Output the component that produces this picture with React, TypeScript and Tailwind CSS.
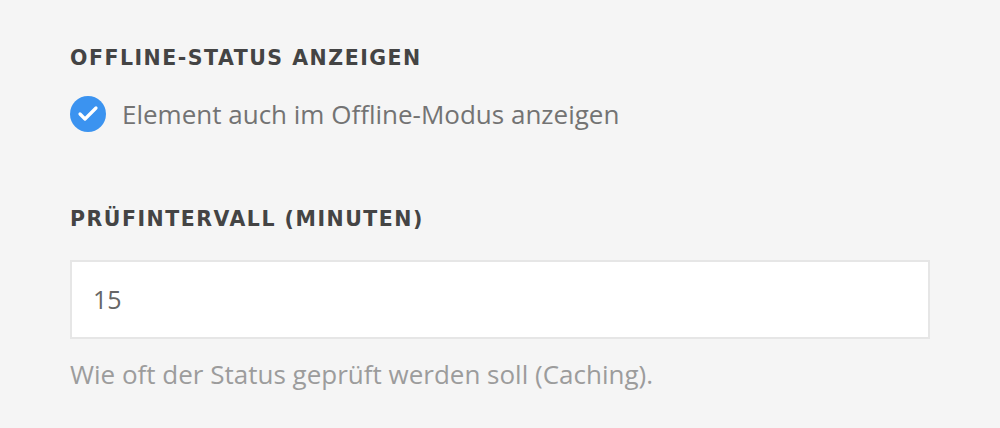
import { Check } from 'lucide-react'

export default function App() {
  return (
    <div className="min-h-screen w-full bg-[#f5f5f5] px-[70px] pt-[42px]">
      <div className="w-[860px] font-['Open_Sans',sans-serif]">
        {/* Offline status */}
        <h3 className="font-['DejaVu_Sans',sans-serif] text-[20.5px] font-bold uppercase leading-[32px] tracking-[1.5px] text-[#444444]">
          Offline-Status anzeigen
        </h3>
        <label className="mt-[22px] flex items-center gap-[16px]">
          <span className="flex h-[36px] w-[36px] items-center justify-center rounded-full bg-[#3b93f0]">
            <Check className="h-[24px] w-[24px] text-white" strokeWidth={3.2} />
          </span>
          <span className="text-[26px] leading-[36px] text-[#737373]">
            Element auch im Offline-Modus anzeigen
          </span>
        </label>

        {/* Interval */}
        <h3 className="mt-[71px] font-['DejaVu_Sans',sans-serif] text-[20.5px] font-bold uppercase leading-[32px] tracking-[1.5px] text-[#444444]">
          Prüfintervall (Minuten)
        </h3>
        <div className="mt-[25px] flex h-[79px] w-[860px] items-center border-2 border-[#e6e6e6] bg-white px-[21px]">
          <span className="text-[25px] text-[#666666]">15</span>
        </div>
        <p className="mt-[17px] text-[26px] leading-[36px] text-[#9c9c9c]">
          Wie oft der Status geprüft werden soll (Caching).
        </p>
      </div>
    </div>
  )
}
